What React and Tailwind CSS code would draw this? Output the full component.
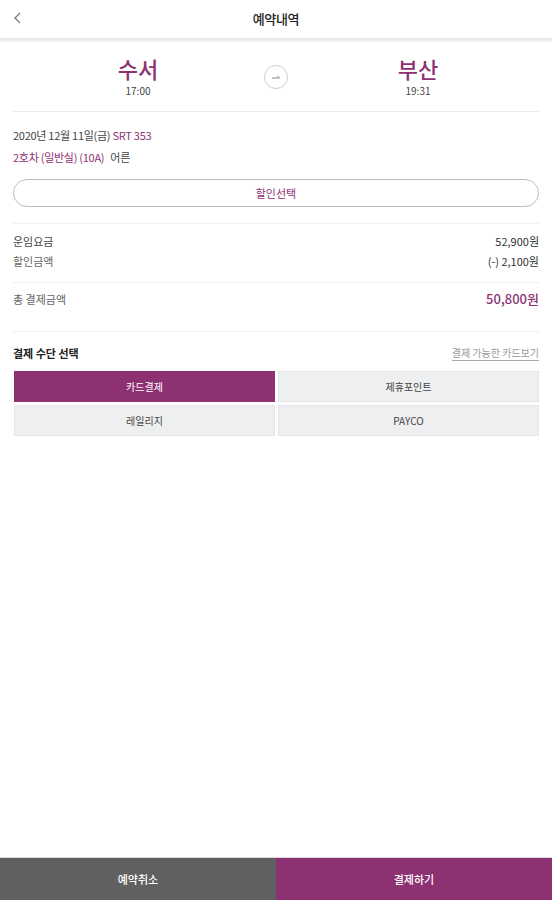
import React, { useState } from "react";

const PURPLE = "text-[#8e3172]";

const App = () => {
  const [method, setMethod] = useState("card");

  const methods = [
    { id: "card", label: "카드결제" },
    { id: "point", label: "제휴포인트" },
    { id: "mileage", label: "레일리지" },
    { id: "payco", label: "PAYCO" },
  ];

  return (
    <div
      className="h-[900px] w-full flex flex-col bg-white text-[#333]"
      style={{ fontFamily: '"Noto Sans CJK KR", "Noto Sans", sans-serif' }}
    >
      {/* Header */}
      <div className="relative h-[38px] flex items-center justify-center">
        <button className="absolute left-[12px] top-[11px] p-0" aria-label="뒤로">
          <svg width="12" height="14" viewBox="0 0 12 14" fill="none">
            <path d="M8 2 L3 7 L8 12" stroke="#777" strokeWidth="1.3" />
          </svg>
        </button>
        <div className="text-[13px] font-medium text-[#222] tracking-tight">예약내역</div>
      </div>
      <div className="h-[4px] bg-gradient-to-b from-[#e4e4e4] to-[#f6f6f6]" />

      {/* Stations */}
      <div className="px-[13px] pt-[14px] pb-[13px] grid grid-cols-[250px_26px_1fr] items-center">
        <div className="flex flex-col items-center">
          <div className={`text-[22px] leading-[24px] font-medium ${PURPLE}`}>수서</div>
          <div className="text-[10px] leading-[14px] mt-[4px] text-[#444]">17:00</div>
        </div>
        <div className="flex justify-center">
          <svg width="26" height="26" viewBox="0 0 26 26" fill="none">
            <circle cx="13" cy="13" r="11.5" stroke="#cfcfcf" strokeWidth="1" />
            <path d="M9 14 H16.5 L14.5 12" stroke="#888" strokeWidth="1" />
          </svg>
        </div>
        <div className="flex flex-col items-center pl-[8px]">
          <div className={`text-[22px] leading-[24px] font-medium ${PURPLE}`}>부산</div>
          <div className="text-[10px] leading-[14px] mt-[4px] text-[#444]">19:31</div>
        </div>
      </div>
      <div className="mx-[13px] h-px bg-[#ececec]" />

      {/* Journey info */}
      <div className="px-[13px] pt-[12px]">
        <div className="text-[11px] leading-[22px] tracking-tight text-[#444]">
          2020년 12월 11일(금) <span className={PURPLE}>SRT 353</span>
        </div>
        <div className="text-[11px] leading-[22px] tracking-tight">
          <span className={PURPLE}>2호차 (일반실) (10A)</span>
          <span className="ml-[6px] text-[#444]">어른</span>
        </div>
        <button className="mt-[11px] w-full h-[28px] rounded-full border border-[#bdbdbd] flex items-center justify-center">
          <span className={`text-[11px] ${PURPLE}`}>할인선택</span>
        </button>
      </div>
      <div className="mx-[13px] mt-[16px] h-px bg-[#f0f0f0]" />

      {/* Fares */}
      <div className="px-[13px] pt-[7px]">
        <div className="flex justify-between text-[11px] leading-[20px]">
          <span className="text-[#444]">운임요금</span>
          <span className="text-[#333]">52,900원</span>
        </div>
        <div className="flex justify-between text-[11px] leading-[20px]">
          <span className="text-[#666]">할인금액</span>
          <span className="text-[#333]">(-) 2,100원</span>
        </div>
      </div>
      <div className="mx-[13px] mt-[11px] h-px bg-[#f0f0f0]" />
      <div className="px-[13px] pt-[6px] flex justify-between items-center leading-[20px]">
        <span className="text-[11px] text-[#666]">총 결제금액</span>
        <span className={`text-[13px] font-medium ${PURPLE}`}>50,800원</span>
      </div>
      <div className="mx-[13px] mt-[22px] h-px bg-[#efefef]" />

      {/* Payment method */}
      <div className="px-[13px] pt-[11px]">
        <div className="flex justify-between items-center leading-[20px]">
          <span className="text-[11px] font-semibold text-[#222]">결제 수단 선택</span>
          <span className="text-[10px] text-[#999] underline underline-offset-[3px] decoration-[#aaa]">
            결제 가능한 카드보기
          </span>
        </div>
        <div className="mt-[8px] grid grid-cols-2 gap-[3px] pl-[1px]">
          {methods.map((m) => (
            <button
              key={m.id}
              onClick={() => setMethod(m.id)}
              className={`h-[31px] flex items-center justify-center text-[10px] ${
                method === m.id
                  ? "bg-[#8e3172] text-white"
                  : "bg-[#eeeff0] text-[#444] border border-[#e6e6e6]"
              }`}
            >
              {m.label}
            </button>
          ))}
        </div>
      </div>

      {/* Bottom actions */}
      <div className="mt-auto border-t border-[#d8d8d8] grid grid-cols-2 h-[43px]">
        <button className="bg-[#606060] text-white text-[11px] font-medium">예약취소</button>
        <button className="bg-[#8e3172] text-white text-[11px] font-medium">결제하기</button>
      </div>
    </div>
  );
};

export default App;
